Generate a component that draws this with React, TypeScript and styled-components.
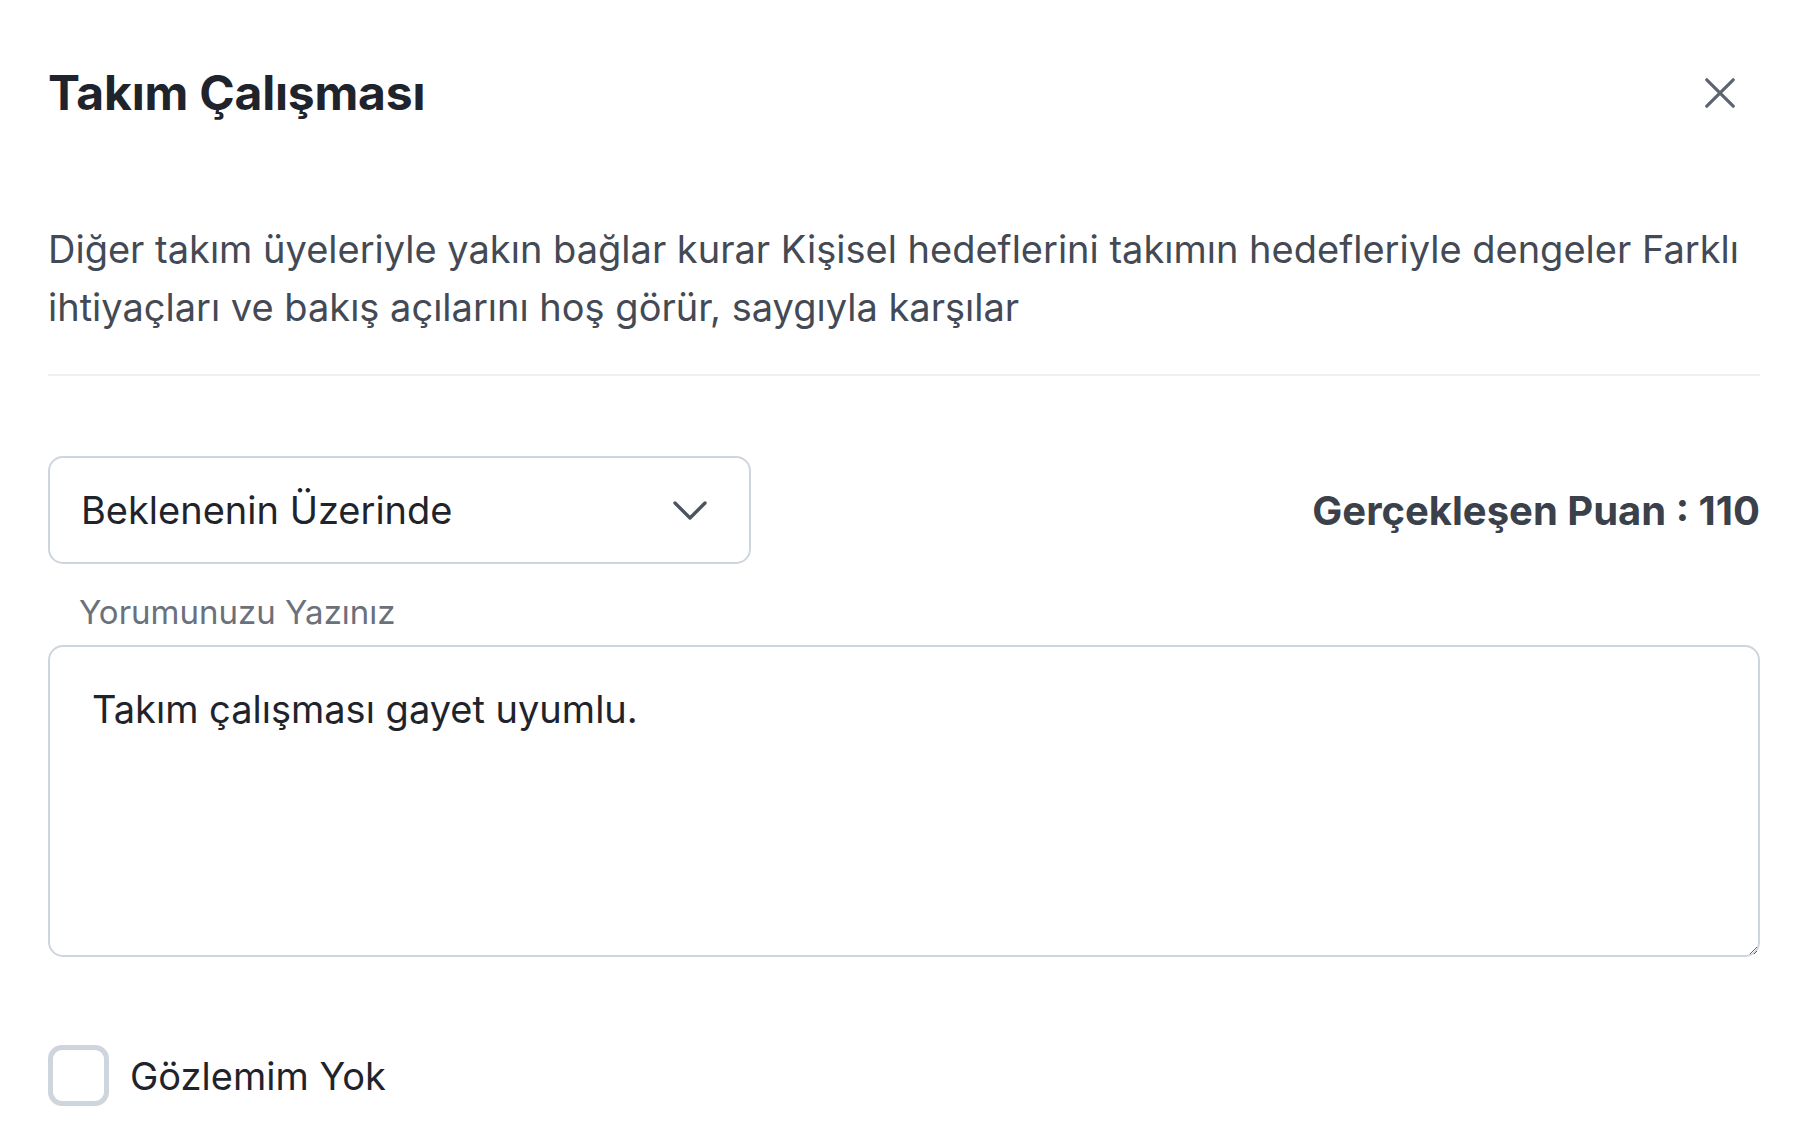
import React from 'react';
import styled, { createGlobalStyle } from 'styled-components';

const GlobalStyle = createGlobalStyle`
  html, body {
    margin: 0;
    padding: 0;
    background: #ffffff;
  }
  body {
    font-family: Inter, "Noto Sans", "Liberation Sans", sans-serif;
    -webkit-font-smoothing: antialiased;
  }
  * {
    box-sizing: border-box;
  }
`;

// Modal body
const Panel = styled.section`
  padding: 53px 52px 40px 48px;
  display: flex;
  flex-direction: column;
`;

const Header = styled.header`
  display: flex;
  align-items: center;
  justify-content: space-between;
`;

const Title = styled.h2`
  margin: 0;
  font-size: 48px;
  line-height: 1.2;
  font-weight: 700;
  color: #1f242c;
  letter-spacing: -0.2px;
`;

const CloseButton = styled.button`
  width: 80px;
  height: 80px;
  display: flex;
  align-items: center;
  justify-content: center;
  border: none;
  background: transparent;
  padding: 0;
  cursor: pointer;
  color: #5d6470;
`;

const Description = styled.p`
  margin: 87px 0 0;
  font-size: 38px;
  line-height: 58px;
  color: #434a55;
`;

const Divider = styled.hr`
  margin: 38px 0 0;
  border: none;
  height: 2px;
  background: #edf1f6;
`;

const ScoreRow = styled.div`
  margin-top: 80px;
  display: flex;
  align-items: center;
  justify-content: space-between;
`;

const SelectBox = styled.div`
  width: 703px;
  height: 108px;
  border: 2px solid #cfd5dc;
  border-radius: 15px;
  padding: 0 42px 0 31px;
  display: flex;
  align-items: center;
  justify-content: space-between;
  font-size: 38px;
  color: #1f242c;
  cursor: pointer;
`;

const Score = styled.div`
  font-size: 40px;
  font-weight: 700;
  color: #3b414a;
`;

const FieldLabel = styled.label`
  display: block;
  margin: 28px 0 0 31px;
  font-size: 33px;
  line-height: 40px;
  color: #6b717b;
`;

const Comment = styled.textarea`
  margin-top: 13px;
  width: 100%;
  height: 312px;
  border: 2px solid #cfd5dc;
  border-radius: 15px;
  padding: 35px 42px;
  font-family: inherit;
  font-size: 38px;
  line-height: 54px;
  color: #1f242c;
  outline: none;
  resize: vertical;
`;

const CheckRow = styled.label`
  margin-top: 88px;
  display: flex;
  align-items: center;
  gap: 21px;
  cursor: pointer;
`;

const CheckBox = styled.span`
  width: 61px;
  height: 61px;
  border: 5px solid #cfd5dc;
  border-radius: 14px;
  flex-shrink: 0;
`;

const CheckText = styled.span`
  font-size: 38px;
  color: #1f242c;
`;

const CloseIcon = () => (
  <svg width="30" height="30" viewBox="0 0 30 30" fill="none">
    <path d="M1.8 1.8 L28.2 28.2 M28.2 1.8 L1.8 28.2" stroke="currentColor" strokeWidth="3.2" strokeLinecap="round" />
  </svg>
);

const Chevron = () => (
  <svg width="34" height="19" viewBox="0 0 34 19" fill="none">
    <path d="M2 2 L17 17 L32 2" stroke="#4d5460" strokeWidth="3.4" strokeLinecap="round" strokeLinejoin="round" />
  </svg>
);

export default function App() {
  return (
    <>
      <GlobalStyle />
      <Panel>
        <Header>
          <Title>Takım Çalışması</Title>
          <CloseButton aria-label="Kapat">
            <CloseIcon />
          </CloseButton>
        </Header>

        <Description>
          Diğer takım üyeleriyle yakın bağlar kurar Kişisel hedeflerini takımın hedefleriyle dengeler Farklı
          ihtiyaçları ve bakış açılarını hoş görür, saygıyla karşılar
        </Description>

        <Divider />

        <ScoreRow>
          <SelectBox>
            <span>Beklenenin Üzerinde</span>
            <Chevron />
          </SelectBox>
          <Score>Gerçekleşen Puan : 110</Score>
        </ScoreRow>

        <FieldLabel htmlFor="comment">Yorumunuzu Yazınız</FieldLabel>
        <Comment id="comment" defaultValue="Takım çalışması gayet uyumlu." />

        <CheckRow>
          <CheckBox />
          <CheckText>Gözlemim Yok</CheckText>
        </CheckRow>
      </Panel>
    </>
  );
}
